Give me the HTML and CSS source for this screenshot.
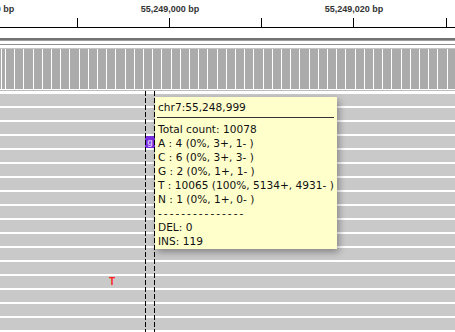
FILE: index.html
```html
<!DOCTYPE html>
<html lang="en">
<head>
  <meta charset="UTF-8" />
  <title>IGV alignment view</title>
  <link rel="stylesheet" href="styles.css">
</head>
<body>
  <div class="view">
    <div class="ruler">
      <span class="label" style="left:-15px">55,248,980 bp</span>
      <span class="label" style="left:170px">55,249,000 bp</span>
      <span class="label" style="left:354px">55,249,020 bp</span>
      <span class="tick" style="left:77px"></span>
      <span class="tick" style="left:169px"></span>
      <span class="tick" style="left:261px"></span>
      <span class="tick" style="left:353px"></span>
      <span class="tick" style="left:446px"></span>
    </div>

    <div class="gene-band"></div>
    <div class="thin-line dark"></div>
    <div class="thin-line light"></div>
    <div class="coverage"></div>
    <div class="thin-line bottom"></div>

    <div class="reads">
      <div class="read"></div>
      <div class="read"></div>
      <div class="read"></div>
      <div class="read"><span class="base purple">g</span></div>
      <div class="read"></div>
      <div class="read"></div>
      <div class="read"></div>
      <div class="read"></div>
      <div class="read"></div>
      <div class="read"></div>
      <div class="read"></div>
      <div class="read"></div>
      <div class="read"></div>
      <div class="read"><span class="base mismatch">T</span></div>
      <div class="read"></div>
      <div class="read"></div>
      <div class="read"></div>
    </div>

    <div class="center-line left"></div>
    <div class="center-line right"></div>

    <div class="popup">
      <div class="popup-title">chr7:55,248,999</div>
      <div class="popup-rule"></div>
      <div>Total count: 10078</div>
      <div>A : 4 (0%, 3+, 1- )</div>
      <div>C : 6 (0%, 3+, 3- )</div>
      <div>G : 2 (0%, 1+, 1- )</div>
      <div>T : 10065 (100%, 5134+, 4931- )</div>
      <div>N : 1 (0%, 1+, 0- )</div>
      <div class="dashes">---------------</div>
      <div>DEL: 0</div>
      <div>INS: 119</div>
    </div>
  </div>
</body>
</html>
```

FILE: styles.css
```css
body {
  margin: 0;
  background: #fff;
  overflow: hidden;
}

.view {
  position: relative;
  width: 455px;
  height: 332px;
  overflow: hidden;
}

.ruler {
  position: relative;
  height: 27px;
  border-bottom: 1px solid #000;
}

.ruler .label {
  position: absolute;
  top: 4px;
  transform: translateX(-50%);
  font-family: "Liberation Sans", Arial, sans-serif;
  font-size: 9px;
  font-weight: bold;
  color: #333;
  white-space: nowrap;
}

.ruler .tick {
  position: absolute;
  top: 18px;
  width: 1px;
  height: 9px;
  background: #000;
}

.gene-band {
  margin-top: 10px;
  height: 1px;
  border-top: 2px solid #727272;
  background: #9c9c9c;
}

.thin-line {
  height: 1px;
}

.thin-line.dark {
  margin-top: 3px;
  background: #8e8e8e;
}

.thin-line.light {
  margin-top: 3px;
  background: #c4c4c4;
}

.thin-line.bottom {
  margin-top: 1px;
  background: #bdbdbd;
}

.coverage {
  height: 40px;
  background: repeating-linear-gradient(to right, #fff 0 1px, #ababab 1px 9.2px);
  background-position: 5px 0;
}

.reads {
  margin-top: 3px;
}

.read {
  position: relative;
  height: 12px;
  border-bottom: 2px solid #fff;
  background: #c9c9c9;
}

.base {
  position: absolute;
  top: 0;
  height: 12px;
  font-family: "Liberation Sans", Arial, sans-serif;
  font-size: 9px;
  font-weight: bold;
  line-height: 12px;
  text-align: center;
}

.base.purple {
  left: 145px;
  width: 10px;
  background: #7a2ee0;
  color: #d9c4ff;
}

.base.mismatch {
  left: 107px;
  width: 10px;
  font-size: 10px;
  color: #ff1f1f;
}

.center-line {
  position: absolute;
  top: 91px;
  bottom: 0;
  width: 1px;
  background: repeating-linear-gradient(to bottom, #000 0 5px, transparent 5px 7px);
}

.center-line.left {
  left: 145px;
}

.center-line.right {
  left: 154px;
}

.popup {
  position: absolute;
  left: 155px;
  top: 97px;
  width: 176px;
  padding: 3px 3px 1px 3px;
  background: #ffffcc;
  box-shadow: 2px 3px 7px rgba(0, 0, 0, 0.35);
  font-family: "DejaVu Sans", sans-serif;
  font-size: 10.6px;
  line-height: 14px;
  color: #111;
  white-space: nowrap;
}

.popup-rule {
  margin: 3px 0 4px -1px;
  height: 1px;
  background: #333;
}

.dashes {
  letter-spacing: 2px;
}
```
